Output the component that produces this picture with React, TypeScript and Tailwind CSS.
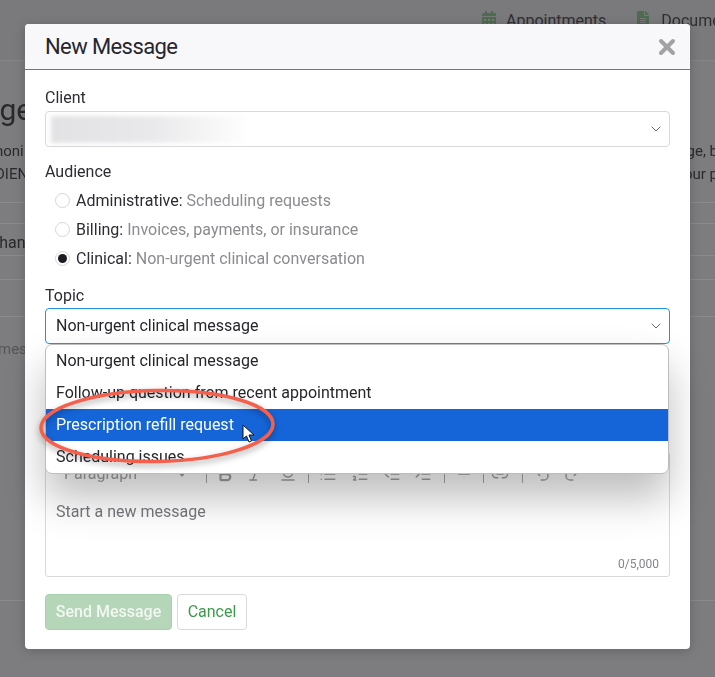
import { Bold, ChevronDown, Indent, Italic, Link2, List, ListOrdered, Minus, Outdent, Redo2, Underline, Undo2, X } from "lucide-react";
import { FaCalendarAlt, FaFileAlt } from "react-icons/fa";

const font = { fontFamily: "Roboto, sans-serif" };

function Radio({ checked, name, hint }: { checked?: boolean; name: string; hint: string }) {
  return (
    <div className="flex h-[29px] items-center pl-[10px]">
      <span className="flex h-[15px] w-[15px] items-center justify-center rounded-full border border-[#d5d5d8] bg-white">
        {checked && <span className="h-[9px] w-[9px] rounded-full bg-[#1c1c22]" />}
      </span>
      <span className="ml-[6px] text-[16px] text-[#2c2c34]">{name}:</span>
      <span className="ml-[4px] text-[16px] text-[#8b8b90]">{hint}</span>
    </div>
  );
}

function Sep({ ml = 0 }: { ml?: number }) {
  return <span className="h-[18px] w-px shrink-0 bg-[#a9a9ab]" style={{ marginLeft: ml }} />;
}

function Tool({ children, w }: { children: React.ReactNode; w: number }) {
  return <span className="flex shrink-0 justify-center text-[#a0a0a3]" style={{ width: w }}>{children}</span>;
}

export default function App() {
  const icon = { size: 18, strokeWidth: 2 };
  return (
    <div className="relative h-[677px] w-[715px] overflow-hidden bg-[#7d7c7e] text-[#1f1f24]" style={font}>
      {/* dimmed page behind the dialog */}
      <div className="blur-[0.6px]">
        <div className="flex h-[61px] items-start border-b border-[#858486] bg-[#7a797b] pl-[481px] pt-[9px] text-[16px] text-[#2f2f33]">
          <FaCalendarAlt className="mt-[2px] shrink-0 text-[#4f6b50]" size={16} />
          <span className="ml-[9px] whitespace-nowrap">Appointments</span>
          <FaFileAlt className="ml-[29px] mt-[2px] shrink-0 text-[#4f6b50]" size={16} />
          <span className="ml-[10px] whitespace-nowrap">Documents</span>
        </div>
        <div className="-ml-[90px] mt-[29px] text-[30px] leading-[40px] text-[#2a2a2e]">Messages</div>
        <div className="mt-[10px] flex justify-between text-[15px] leading-[23px] text-[#2a2a2e]">
          <div className="-ml-[5px]">honi<br />DIEN</div>
          <div className="-mr-[3px] text-right">ge, b<br />our p</div>
        </div>
        <div className="mt-[16px] border-t border-[#8b8a8c]" />
        <div className="mt-[20px] border-t border-[#8b8a8c]" />
        <div className="-ml-[14px] mt-[10px] text-[16px] leading-[18px] text-[#2a2a2e]">Inhan</div>
        <div className="mt-[3px] border-t border-[#8b8a8c]" />
        <div className="mt-[23px] border-t border-[#8b8a8c]" />
        <div className="mt-[36px] border-t border-[#8b8a8c]" />
        <div className="-ml-[2px] mt-[21px] text-[15px] text-[#55555a]">mes</div>
        <div className="mt-[239px] border-t border-[#8b8a8c]" />
      </div>

      <div className="absolute left-[25px] top-[24px] h-[625px] w-[665px] rounded-[4px] bg-white shadow-[0_2px_12px_rgba(0,0,0,0.2)]">
        <div className="flex h-[46px] items-center justify-between rounded-t-[4px] border-b border-[#4f8f5f] bg-[#f8f7fa] pl-[20px] pr-[11px]">
          <h1 className="text-[22px] tracking-[-0.6px] text-[#26262c]">New Message</h1>
          <X size={24} strokeWidth={4} className="text-[#a2a2a5]" />
        </div>
        <div className="px-[20px] pt-[18px]">
          <div className="h-[20px] text-[16px] leading-[20px] text-[#2c2c34]">Client</div>
          <div className="mt-[3px] flex h-[36px] items-center justify-between rounded-[4px] border border-[#d9d9dc] pl-[5px] pr-[5px]">
            <span className="h-[27px] w-[200px] bg-gradient-to-r from-[#e2e2e4] via-[#e9e9eb] to-white blur-[2px]" />
            <ChevronDown size={16} strokeWidth={1.25} className="text-[#4b4b50]" />
          </div>
          <div className="mt-[15px] h-[20px] text-[16px] leading-[20px] text-[#2c2c34]">Audience</div>
          <div className="mt-[4px]">
            <Radio name="Administrative" hint="Scheduling requests" />
            <Radio name="Billing" hint="Invoices, payments, or insurance" />
            <Radio checked name="Clinical" hint="Non-urgent clinical conversation" />
          </div>
          <div className="mt-[13px] h-[20px] text-[16px] leading-[20px] text-[#2c2c34]">Topic</div>
          <div className="relative mt-[2px]">
            <div className="flex h-[36px] items-center justify-between rounded-[4px] border border-[#2196d8] pl-[10px] pr-[5px] text-[16px] text-[#26262c]">
              Non-urgent clinical message
              <ChevronDown size={16} strokeWidth={1.25} className="text-[#4b4b50]" />
            </div>
            <div className="absolute left-0 top-[36px] z-10 w-[624px] overflow-hidden rounded-[7px] border border-[#bdbdc0] bg-white text-[16px] text-[#26262c] shadow-[0_24px_40px_rgba(0,0,0,0.26)]">
              <div className="flex h-[32px] items-center pl-[10px]">Non-urgent clinical message</div>
              <div className="flex h-[32px] items-center pl-[10px]">Follow-up question from recent appointment</div>
              <div className="flex h-[32px] items-center bg-[#1565d8] pl-[10px] text-white">Prescription refill request</div>
              <div className="flex h-[32px] items-center pl-[10px]">Scheduling issues</div>
            </div>
          </div>
          <div className="mt-[108px] h-[125px] rounded-[3px] border border-[#d9d9dc]">
            <div className="flex h-[42px] items-center pl-[18px] blur-[0.5px]">
              <span className="flex w-[142px] shrink-0 items-center text-[16px] text-[#a0a0a3]">
                Paragraph
                <svg className="ml-[40px]" width="10" height="6" viewBox="0 0 10 6"><path d="M0 0h10L5 6z" fill="#a0a0a3" /></svg>
              </span>
              <Sep />
              <Tool w={36}><Bold {...icon} strokeWidth={3} /></Tool>
              <Tool w={24}><Italic {...icon} /></Tool>
              <Tool w={41}><Underline {...icon} /></Tool>
              <Sep />
              <Tool w={38}><List {...icon} /></Tool>
              <Tool w={26}><ListOrdered {...icon} /></Tool>
              <Tool w={38}><Outdent {...icon} /></Tool>
              <Tool w={24}><Indent {...icon} /></Tool>
              <Sep ml={9} />
              <Tool w={38}><Minus {...icon} /></Tool>
              <Sep />
              <Tool w={32}><Link2 {...icon} /></Tool>
              <Sep ml={6} />
              <Tool w={38}><Undo2 {...icon} /></Tool>
              <Tool w={22}><Redo2 {...icon} /></Tool>
            </div>
            <div className="pl-[10px] pt-[6px] text-[16px] leading-[22px] text-[#77777c]">Start a new message</div>
            <div className="mt-[33px] pr-[10px] text-right text-[12px] leading-[16px] text-[#85858a]">0/5,000</div>
          </div>
          <div className="mt-[17px] flex gap-[5px]">
            <button className="h-[36px] w-[127px] rounded-[4px] border border-[#a9d0ae] bg-[#b5d6b8] text-[16px] font-medium text-[#f1f7f1]">Send Message</button>
            <button className="h-[36px] w-[70px] rounded-[4px] border border-[#d9d9dc] bg-white text-[16px] text-[#3d9a4a]">Cancel</button>
          </div>
        </div>
      </div>

      {/* hand-drawn annotation and pointer above the screenshot */}
      <svg className="absolute left-0 top-0 z-20" width="715" height="677" style={{ filter: "drop-shadow(0 3px 3px rgba(0,0,0,0.35))" }}>
        <ellipse cx="157" cy="426" rx="116" ry="35.5" fill="none" stroke="#f4604c" strokeWidth="3.5" transform="rotate(-1 157 426)" />
      </svg>
      <svg className="absolute left-[242px] top-[424px] z-30" width="14" height="20" viewBox="0 0 14 20">
        <path d="M1 1 L1 15 L4.5 12 L7 18 L9.5 17 L7 11 L12 11 Z" fill="#fff" stroke="#111" strokeWidth="1" strokeLinejoin="round" />
      </svg>
    </div>
  );
}
